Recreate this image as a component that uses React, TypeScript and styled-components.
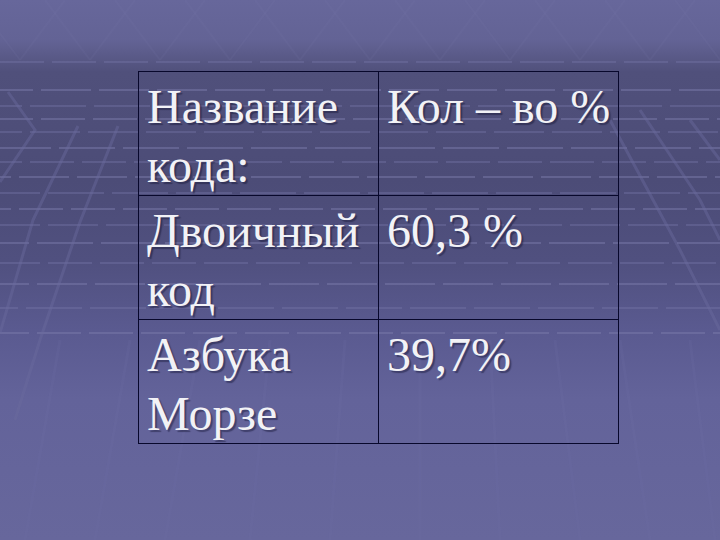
import styled, { createGlobalStyle } from "styled-components";

const GlobalStyle = createGlobalStyle`
  html, body {
    margin: 0;
    padding: 0;
    background: #5a5a8c;
  }
`;

const Slide = styled.main`
  width: 720px;
  height: 540px;
  overflow: hidden;
  display: grid;
  grid-template: 1fr / 1fr;
  background: linear-gradient(
    to bottom,
    #67679b 0px,
    #636395 40px,
    #5a5a88 56px,
    #50507b 72px,
    #4c4c77 180px,
    #50507f 260px,
    #5a5a90 330px,
    #63639a 400px,
    #67679c 540px
  );
`;

const Backdrop = styled.svg`
  grid-area: 1 / 1;
  width: 720px;
  height: 540px;
`;

const Stage = styled.div`
  grid-area: 1 / 1;
  padding: 71px 0 0 138px;
`;

const Grid = styled.table`
  border-collapse: collapse;
  table-layout: fixed;
  width: 480px;
`;

const Cell = styled.td<{ $w: number }>`
  width: ${({ $w }) => $w}px;
  height: 122px;
  padding: 5px 8px 0 8px;
  box-sizing: border-box;
  vertical-align: top;
  white-space: nowrap;
  border: 1px solid #08082c;
  font-family: "Liberation Serif", "Times New Roman", serif;
  font-size: 48px;
  line-height: 59px;
  color: #f2f2f6;
  text-shadow: 2px 2px 1px rgba(20, 20, 50, 0.45);
`;

const rows: [string[], string][] = [
  [["Название", "кода:"], "Кол – во %"],
  [["Двоичный", "код"], "60,3 %"],
  [["Азбука", "Морзе"], "39,7%"],
];

const bandLines = [62, 90, 106, 119, 132, 148, 162, 177, 193, 209, 225, 243, 263, 284, 308, 333];

const fanTop = [60, 130, 200, 270, 345, 420, 490, 555, 620, 690];
const fanBottom = [25, 95, 165, 250, 330, 420, 500, 580, 650, 715];

export default function App() {
  return (
    <>
      <GlobalStyle />
      <Slide>
        <Backdrop viewBox="0 0 720 540">
          {/* dashed tiles of the floor band */}
          {bandLines.map((y, i) => (
            <line
              key={y}
              x1={-((i * 17) % 40)}
              y1={y}
              x2={720}
              y2={y}
              stroke="#7a7aaa"
              strokeOpacity={0.5}
              strokeWidth={i % 2 ? 2 : 1.5}
              strokeDasharray={`${44 + (i % 3) * 6} 8`}
            />
          ))}
          {/* perspective rays, top */}
          <g stroke="#7c7cae" strokeOpacity={0.12} strokeWidth={2} fill="none">
            {[0, 70, 140, 210, 280, 350, 420, 490, 560, 630, 700].map((x) => (
              <line key={`t${x}`} x1={x - 25} y1={0} x2={x + 20} y2={60} />
            ))}
            {[40, 110, 180, 250, 320, 390, 460, 530, 600, 670].map((x) => (
              <line key={`u${x}`} x1={x + 25} y1={0} x2={x - 20} y2={60} />
            ))}
          </g>
          {/* left chevron and slanted rays */}
          <g stroke="#6a6a9e" strokeOpacity={0.45} strokeWidth={3} fill="none">
            <polyline points="8,92 35,130 0,182" />
            <polyline points="78,126 33,220 0,333" />
            <polyline points="118,126 80,222 40,340 15,420" />
            <polyline points="640,110 700,200 720,240" />
            <polyline points="610,120 680,250 720,330" />
            <polyline points="690,120 720,160" />
          </g>
          {/* fan of faint lines in the lower part */}
          <g stroke="#7070a6" strokeOpacity={0.2} strokeWidth={3}>
            {fanTop.map((x, i) => (
              <line key={`f${x}`} x1={x} y1={340} x2={fanBottom[i]} y2={540} />
            ))}
          </g>
        </Backdrop>
        <Stage>
          <Grid>
            <tbody>
              {rows.map(([left, right]) => (
                <tr key={right}>
                  <Cell $w={240}>
                    {left[0]}
                    <br />
                    {left[1]}
                  </Cell>
                  <Cell $w={240}>{right}</Cell>
                </tr>
              ))}
            </tbody>
          </Grid>
        </Stage>
      </Slide>
    </>
  );
}
